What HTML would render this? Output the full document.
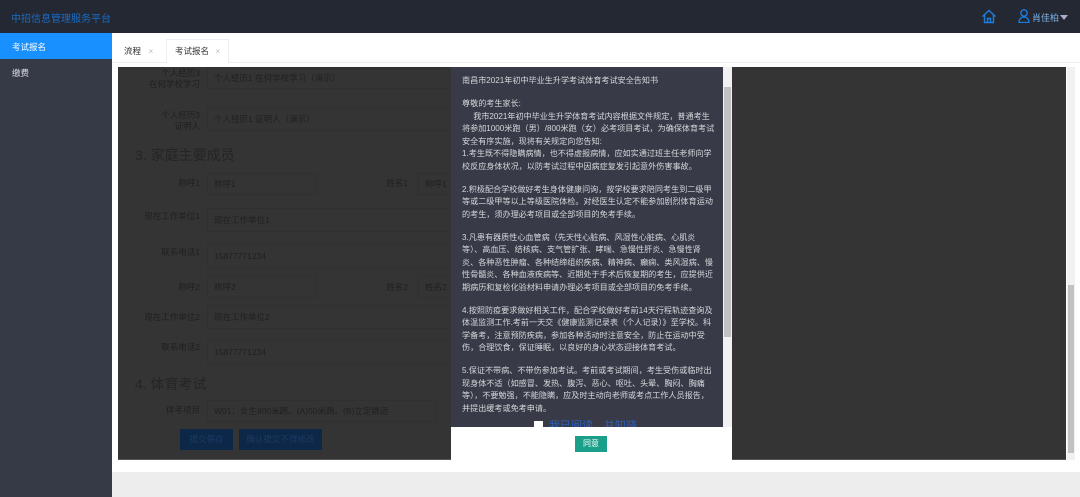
<!DOCTYPE html>
<html><head><meta charset="utf-8"><style>
*{margin:0;padding:0;box-sizing:border-box}
body{width:1080px;height:497px;overflow:hidden;background:#fff;font-family:"Liberation Sans","Noto Sans CJK SC",sans-serif;position:relative}
.a{position:absolute;white-space:nowrap}
.lab{position:absolute;font-size:8.5px;color:#202020;text-align:right;width:90px;line-height:11px}
.fld{position:absolute;border:1px solid #303030;background:#343434;font-size:8.5px;color:#202020;padding-left:6px;white-space:nowrap}
.m div{white-space:nowrap;height:12.5px}
.m .g{margin-top:10.5px}
</style></head><body>
<div class="a" style="left:0;top:0;width:1080px;height:33px;background:#242832"></div>
<div class="a" style="left:11px;top:10px;font-size:10px;color:#1a6cc4">中招信息管理服务平台</div>
<svg class="a" style="left:981px;top:9px" width="16" height="15" viewBox="0 0 16 15"><path d="M1.5 7.5L8 1.5l6.5 6M3.5 6v7.5h9V6M6.5 13.5v-4h3v4" fill="none" stroke="#1a7fe0" stroke-width="1.4"/></svg>
<svg class="a" style="left:1018px;top:9px" width="12" height="14" viewBox="0 0 12 14"><circle cx="6" cy="4" r="3.2" fill="none" stroke="#1a7fe0" stroke-width="1.3"/><path d="M1 13.5c0-3.5 2.2-5.5 5-5.5s5 2 5 5.5z" fill="none" stroke="#1a7fe0" stroke-width="1.3"/></svg>
<div class="a" style="left:1032px;top:11px;font-size:9px;color:#7fb4e6">肖佳柏</div>
<div class="a" style="left:1060px;top:15px;border-left:4px solid transparent;border-right:4px solid transparent;border-top:5px solid #aac"></div>
<div class="a" style="left:0;top:33px;width:112px;height:464px;background:#353a46"></div>
<div class="a" style="left:0;top:33px;width:112px;height:26px;background:#1890ff"></div>
<div class="a" style="left:12px;top:41px;font-size:8.5px;color:#fff">考试报名</div>
<div class="a" style="left:12px;top:67px;font-size:8.5px;color:#dde">缴费</div>
<div class="a" style="left:112px;top:33px;width:968px;height:30px;background:#fff;border-bottom:1px solid #eee"></div>
<div class="a" style="left:124px;top:45px;font-size:8.5px;color:#333">流程 <span style="color:#bbb;margin-left:5px">×</span></div>
<div class="a" style="left:166px;top:39px;width:63px;height:24px;border:1px solid #eee;border-bottom:none;background:#fff"></div>
<div class="a" style="left:175px;top:45px;font-size:8.5px;color:#333">考试报名 <span style="color:#bbb;margin-left:4px">×</span></div>
<div class="a" style="left:112px;top:472px;width:968px;height:25px;background:#ededed"></div>
<div class="a" style="left:118px;top:67px;width:948px;height:393px;background:#343434;border-bottom:1px solid #555"></div>
<div class="a" style="left:1067px;top:67px;width:8px;height:393px;background:#f1f1f1"></div>
<div class="a" style="left:1068px;top:285px;width:6px;height:168px;background:#c1c1c1"></div>
<div class="lab" style="left:110px;top:68px">个人经历3<br>在何学校学习</div>
<div class="fld" style="left:207px;top:67px;width:245px;height:22px;line-height:20px">个人经历1 在何学校学习（演示）</div>
<div class="lab" style="left:110px;top:110px">个人经历3<br>证明人</div>
<div class="fld" style="left:207px;top:107px;width:245px;height:24px;line-height:22px">个人经历1 证明人（演示）</div>
<div class="a" style="left:135px;top:145px;font-size:14px;color:#252525">3. 家庭主要成员</div>
<div class="lab" style="left:110px;top:178px">称呼1</div>
<div class="fld" style="left:207px;top:173px;width:110px;height:22px;line-height:20px">称呼1</div>
<div class="lab" style="left:320px;top:178px;width:88px">姓名1</div>
<div class="fld" style="left:418px;top:173px;width:34px;height:22px;line-height:20px">称呼1</div>
<div class="lab" style="left:110px;top:211px">现在工作单位1</div>
<div class="fld" style="left:207px;top:208px;width:245px;height:24px;line-height:22px">现在工作单位1</div>
<div class="lab" style="left:110px;top:247px">联系电话1</div>
<div class="fld" style="left:207px;top:244px;width:245px;height:24px;line-height:22px">15877771234</div>
<div class="lab" style="left:110px;top:282px">称呼2</div>
<div class="fld" style="left:207px;top:276px;width:110px;height:22px;line-height:20px">称呼2</div>
<div class="lab" style="left:320px;top:282px;width:88px">姓名2</div>
<div class="fld" style="left:418px;top:276px;width:34px;height:22px;line-height:20px">姓名2</div>
<div class="lab" style="left:110px;top:312px">现在工作单位2</div>
<div class="fld" style="left:207px;top:305px;width:245px;height:24px;line-height:22px">现在工作单位2</div>
<div class="lab" style="left:110px;top:342px">联系电话2</div>
<div class="fld" style="left:207px;top:340px;width:245px;height:24px;line-height:22px">15877771234</div>
<div class="a" style="left:135px;top:374px;font-size:14px;color:#252525">4. 体育考试</div>
<div class="lab" style="left:110px;top:405px">体考项目</div>
<div class="fld" style="left:207px;top:400px;width:230px;height:22px;line-height:20px">W01：女生800米跑、(A)50米跑、(B)立定跳远</div>
<div class="a" style="left:180px;top:429px;width:53px;height:21px;background:#0c2748;color:#1d3a62;font-size:8.5px;line-height:21px;text-align:center">提交保存</div>
<div class="a" style="left:239px;top:429px;width:83px;height:21px;background:#0c2748;color:#1d3a62;font-size:8.5px;line-height:21px;text-align:center">确认提交不得修改</div>
<div class="a" style="left:451px;top:67px;width:281px;height:393px;background:#fff"></div>
<div class="a" style="left:451px;top:67px;width:272px;height:360px;background:#383b47"></div>
<div class="a" style="left:723px;top:67px;width:9px;height:360px;background:#f1f1f1"></div>
<div class="a" style="left:724px;top:87px;width:7px;height:250px;background:#c1c1c1"></div>
<div class="a m" style="left:462px;top:75px;font-size:8.1px;line-height:12.5px;color:#d6d7dc">
<div>南昌市2021年初中毕业生升学考试体育考试安全告知书</div>
<div class="g">尊敬的考生家长:</div>
<div>&nbsp;&nbsp;&nbsp;&nbsp;&nbsp;我市2021年初中毕业生升学体育考试内容根据文件规定，普通考生</div>
<div>将参加1000米跑（男）/800米跑（女）必考项目考试，为确保体育考试</div>
<div>安全有序实施，现将有关规定向您告知:</div>
<div>1.考生既不得隐瞒病情，也不得虚报病情，应如实通过班主任老师向学</div>
<div>校反应身体状况，以防考试过程中因病症复发引起意外伤害事故。</div>
<div class="g">2.积极配合学校做好考生身体健康问询，按学校要求陪同考生到二级甲</div>
<div>等或二级甲等以上等级医院体检。对经医生认定不能参加剧烈体育运动</div>
<div>的考生，须办理必考项目或全部项目的免考手续。</div>
<div class="g">3.凡患有器质性心血管病（先天性心脏病、风湿性心脏病、心肌炎</div>
<div>等）、高血压、结核病、支气管扩张、哮喘、急慢性肝炎、急慢性肾</div>
<div>炎、各种恶性肿瘤、各种结缔组织疾病、精神病、癫痫、类风湿病、慢</div>
<div>性骨髓炎、各种血液疾病等、近期处于手术后恢复期的考生，应提供近</div>
<div>期病历和复检化验材料申请办理必考项目或全部项目的免考手续。</div>
<div class="g">4.按照防疫要求做好相关工作，配合学校做好考前14天行程轨迹查询及</div>
<div>体温监测工作.考前一天交《健康监测记录表（个人记录）》至学校。科</div>
<div>学备考，注意预防疾病，参加各种活动时注意安全，防止在运动中受</div>
<div>伤，合理饮食，保证睡眠，以良好的身心状态迎接体育考试。</div>
<div class="g">5.保证不带病、不带伤参加考试。考前或考试期间，考生受伤或临时出</div>
<div>现身体不适（如感冒、发热、腹泻、恶心、呕吐、头晕、胸闷、胸痛</div>
<div>等），不要勉强，不能隐瞒，应及时主动向老师或考点工作人员报告，</div>
<div>并提出缓考或免考申请。</div>
</div>
<div class="a" style="left:534px;top:421px;width:9px;height:6px;background:#fff"></div>
<div class="a" style="left:549px;top:417px;height:10px;overflow:hidden;font-size:11px;color:#2a5fc0">我已阅读，并知晓</div>
<div class="a" style="left:451px;top:427px;width:281px;height:33px;background:#fff"></div>
<div class="a" style="left:575px;top:436px;width:32px;height:16px;background:#1a9f8a;color:#fff;font-size:8px;line-height:16px;text-align:center">同意</div>
</body></html>
